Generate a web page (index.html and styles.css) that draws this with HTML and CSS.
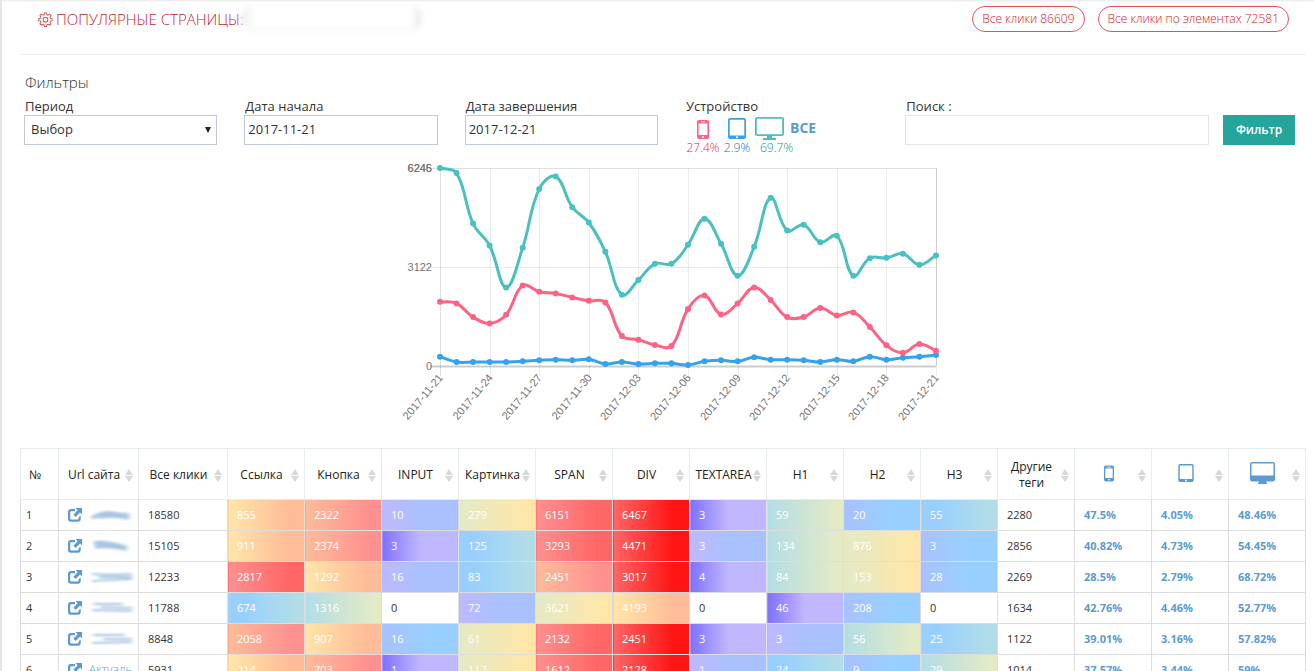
FILE: index.html
```html
<!DOCTYPE html>
<html lang="ru">
<head>
<meta charset="utf-8">
<title>Популярные страницы</title>
<link rel="stylesheet" href="styles.css">
</head>
<body>
<svg class="defs" aria-hidden="true">
  <defs>
    <filter id="soft" x="-20%" y="-60%" width="140%" height="220%"><feGaussianBlur stdDeviation="2 .8"/></filter>
    <symbol id="i-phone" viewBox="0 0 12 19"><path fill-rule="evenodd" d="M2 0h8a2 2 0 0 1 2 2v15a2 2 0 0 1-2 2H2a2 2 0 0 1-2-2V2a2 2 0 0 1 2-2zM1.600 3.500v11.500h8.800V3.500zM4 1.400v.9h4v-.9zM6 16a1 1 0 1 0 0 2 1 1 0 0 0 0-2z"/></symbol>
    <symbol id="i-tablet" viewBox="0 0 18 21"><path fill-rule="evenodd" d="M2 0h14a2 2 0 0 1 2 2v17a2 2 0 0 1-2 2H2a2 2 0 0 1-2-2V2a2 2 0 0 1 2-2zM1.700 1.800v15.700h14.600V1.800zM9 18.200a1.100 1.100 0 1 0 0 2.200 1.100 1.100 0 0 0 0-2.200z"/></symbol>
    <symbol id="i-screen" viewBox="0 0 29 23"><path fill-rule="evenodd" d="M2 0h25a2 2 0 0 1 2 2v15a2 2 0 0 1-2 2H2a2 2 0 0 1-2-2V2a2 2 0 0 1 2-2zM1.800 1.800v15.400h25.400V1.800z"/><path d="M12 19h5v2h4v2H8v-2h4z"/></symbol>
    <symbol id="i-desktop" viewBox="0 0 25 22"><path fill-rule="evenodd" d="M2 0h21a2 2 0 0 1 2 2v15.500a2 2 0 0 1-2 2h-7v1h1V22H8v-1.500h1v-1H2a2 2 0 0 1-2-2V2a2 2 0 0 1 2-2zM1.500 1.500v12h22v-12z"/></symbol>
    <symbol id="i-sort" viewBox="0 0 8 13"><path d="M4 0l4 6H0zM4 13l4-6H0z"/></symbol>
    <symbol id="i-open" viewBox="0 0 14 14"><path fill-rule="evenodd" d="M3 1h4v2.200H3.500q-1.300 0-1.300 1.300v5.800q0 1.300 1.300 1.300h5.800q1.300 0 1.300-1.300V9.200L12.700 7.500V11q0 2.800-2.800 2.800H3Q0 13.800 0 11V4Q0 1 3 1z"/><path d="M7.500 0H14v6.500L12 4.600 7.700 9 5.400 6.700 9.600 2.200z"/></symbol>
    <symbol id="i-gear" viewBox="0 0 16 16"><g fill="none" stroke="currentColor" stroke-width="1.100" stroke-linejoin="round"><path d="M6.900 1h2.200l.4 1.900 1.200.5 1.700-1.100 1.500 1.500-1.100 1.700.5 1.200 1.900.4v2.200l-1.900.4-.5 1.200 1.100 1.700-1.500 1.500-1.700-1.100-1.200.5-.4 1.900H6.900l-.4-1.900-1.200-.5-1.700 1.100-1.500-1.500 1.100-1.700-.5-1.200L.8 9.300V7.100l1.900-.4.5-1.200-1.100-1.700 1.500-1.500 1.700 1.100 1.200-.5z"/><circle cx="8" cy="8.200" r="2.500"/></g></symbol>
  </defs>
</svg>

<div class="page">
  <header class="head">
    <h1 class="head-title"><svg class="gear"><use href="#i-gear"/></svg>Популярные страницы:</h1>
    <span class="head-mask"></span>
    <div class="head-stats">
      <button class="pill" type="button">Все клики 86609</button>
      <button class="pill" type="button">Все клики по элементах 72581</button>
    </div>
  </header>

  <form class="filters" onsubmit="return false">
    <h2 class="filters-title">Фильтры</h2>
    <div class="filters-row">
      <div class="field">
        <label for="period">Период</label>
        <div class="select-box"><select id="period"><option>Выбор</option></select></div>
      </div>
      <div class="field">
        <label for="from">Дата начала</label>
        <input id="from" type="text" value="2017-11-21">
      </div>
      <div class="field">
        <label for="to">Дата завершения</label>
        <input id="to" type="text" value="2017-12-21">
      </div>
      <div class="field">
        <span class="field-name">Устройство</span>
        <div class="devices">
          <a class="device device-phone" href="#"><svg><use href="#i-phone"/></svg><span>27.4%</span></a>
          <a class="device device-tablet" href="#"><svg><use href="#i-tablet"/></svg><span>2.9%</span></a>
          <a class="device device-screen" href="#"><svg><use href="#i-screen"/></svg><span>69.7%</span></a>
          <a class="device-all" href="#">ВСЕ</a>
        </div>
      </div>
      <div class="search">
        <div class="field field-search">
          <label for="search">Поиск :</label>
          <input id="search" class="input-light" type="text">
        </div>
        <button class="submit" type="submit">Фильтр</button>
      </div>
    </div>
  </form>

  <svg class="chart" id="chart" viewBox="0 0 556 272" role="img" aria-label="Клики по дням"></svg>

  <table class="stats">
    <colgroup><col class="col-num"><col class="col-url"><col class="col-all"><col span="14"></colgroup>
    <thead><tr id="head"></tr></thead>
    <tbody id="rows"></tbody>
  </table>
</div>
<script src="app.js"></script>
</body>
</html>
```
FILE: styles.css
```css
* { box-sizing: border-box; }

html, body { height: 100%; }

body {
  margin: 0;
  overflow: hidden;
  background: #fff;
  color: #333;
  font: 13px/18px "Open Sans", "Noto Sans", sans-serif;
}

a { color: #5b9bd1; text-decoration: none; }
input, select, button { font: inherit; color: inherit; border-radius: 0; }
.defs { position: absolute; width: 0; height: 0; }

.page {
  min-height: 100%;
  padding: 0 8px 0 18px;
  border-left: 2px solid #e5e5e5;
  box-shadow: inset 0 3px 2px -2px #e8e8e8;
}

.head {
  display: flex;
  align-items: flex-start;
  height: 55px;
  padding: 6px 17px 0 18px;
  border-bottom: 1px solid #eee;
}
.head-title {
  display: flex;
  align-items: center;
  gap: 3px;
  margin: 0;
  color: #c0282e;
  font-size: 15px;
  font-weight: 300;
  line-height: 26px;
  text-transform: uppercase;
}
.gear { width: 15px; height: 15px; color: #cb5a5e; }
.head-mask {
  width: 182px;
  height: 22px;
  margin-left: -3px;
  border-radius: 10px;
  background: linear-gradient(90deg, #efefef, #fff 8%, #fff 93%, #ececec 98%, #fff);
  box-shadow: 0 2px 4px #f3f3f3;
  filter: blur(2px);
}
.head-stats { display: flex; gap: 13px; margin-left: auto; }
.pill {
  height: 26px;
  padding: 0 9px;
  border: 1px solid #e7505a;
  border-radius: 13px;
  background: #fff;
  color: #d81420;
  font-size: 12px;
  font-weight: 300;
}

.filters { padding: 17px 11px 0 4px; }
.filters-title { margin: 0 0 6px 1px; font-size: 15px; font-weight: 300; line-height: 20px; }
.filters-row {
  display: grid;
  grid-template-columns: repeat(4, minmax(0, 193fr)) minmax(0, 389fr);
  gap: 27px;
}
.field { display: flex; flex-direction: column; }
.field label, .field-name { padding-left: 1px; line-height: 17px; }
.field input, .field select {
  width: 100%;
  height: 30px;
  padding: 0 3px 2px;
  border: 1px solid #c2cad8;
  background: #fff;
}
.field .input-light { border-color: #e5e5e5; }
.select-box { position: relative; }
.select-box select { display: block; padding: 0 6px 2px; appearance: none; }
.select-box::after {
  content: "";
  position: absolute;
  top: 12px;
  right: 6px;
  border: 3px solid transparent;
  border-top: 6px solid #222;
  border-bottom: 0;
  pointer-events: none;
}
.search { display: flex; align-items: flex-end; gap: 14px; }
.field-search { flex: 1; }
.submit {
  width: 72px;
  height: 30px;
  padding: 0;
  border: 0;
  background: #26a69a;
  color: #fff;
  font-size: 12px;
  font-weight: 600;
}

.devices { display: flex; gap: 5px; height: 30px; padding: 2px 0 0 2px; }
.device { display: flex; flex-direction: column; align-items: center; font-size: 12px; font-weight: 300; line-height: 16px; }
.device svg { flex: none; }
.device-phone { width: 32px; color: #f01848; }
.device-phone svg { width: 12px; height: 19px; margin: 3px 0 1px; fill: #ff6384; }
.device-tablet { width: 26px; color: #0a72c8; }
.device-tablet svg { width: 18px; height: 21px; margin: 1px 0; fill: #36a2eb; }
.device-screen { width: 29px; align-items: flex-start; color: #0c9090; }
.device-screen svg { width: 29px; height: 23px; fill: #4bc0c0; }
.device-screen span { padding-left: 5px; }
.device-all { padding: 2px 0 0 1px; font-size: 14px; font-weight: 700; }

.chart { display: block; width: 556px; height: 272px; margin: 8px auto 23px; }
.chart text { fill: #747474; font: 11px "Liberation Sans", Arial, sans-serif; text-anchor: end; }
.grid, .grid-soft { fill: none; stroke: #000; stroke-opacity: .12; }
.grid-soft { stroke-opacity: .08; }
.axis { stroke: #000; stroke-opacity: .2; stroke-width: 2; }
.line { fill: none; stroke-width: 3; }

.stats { width: 100%; table-layout: fixed; border-collapse: collapse; }
.col-num { width: 38px; }
.col-url { width: 80px; }
.col-all { width: 89px; }
.stats th {
  position: relative;
  height: 51px;
  padding: 2px 13px 0 4px;
  border: 1px solid #e7ecf1;
  font-size: 12px;
  font-weight: 400;
  line-height: 16px;
  color: #222;
}
.stats th svg { fill: #5b9bd1; vertical-align: middle; }
.stats th > svg { margin-bottom: 4px; }
.sort {
  position: absolute;
  top: 20px;
  right: 5px;
  width: 8px;
  height: 13px;
  padding: 0;
  border: 0;
  background: none;
}
.stats th .sort svg { display: block; width: 8px; height: 13px; fill: #d8d8d8; }
.h-phone { width: 10px; height: 17px; }
.h-tablet { width: 16px; height: 18px; }
.h-desktop { width: 25px; height: 22px; }
.stats td {
  height: 31px;
  padding: 0 9px;
  border: 1px solid #ddd;
  font-size: 11px;
  line-height: 18px;
  white-space: nowrap;
  overflow: hidden;
}
.stats .num { padding: 0 5px; }
.stats .share { color: #5b9bd1; font-weight: 700; }
.site { display: flex; align-items: center; gap: 7px; font-size: 12px; font-weight: 300; }
.site svg { flex: none; }
.site-icon { width: 14px; height: 14px; fill: #5b9bd1; }
.smear { width: 50px; height: 18px; }

.stats .heat { color: #fff; }
.heat-0 { background: linear-gradient(90deg, #8070ff, #c0b8ff 50%); }
.heat-1 { background: linear-gradient(90deg, #c0b8ff, #a9c1ff 50%); }
.heat-2 { background: linear-gradient(90deg, #a9c1ff, #99cfff 60%); }
.heat-3 { background: linear-gradient(90deg, #99cfff 20%, #b2dde6 90%); }
.heat-4 { background: linear-gradient(90deg, #b2dde6, #e3eac6 90%); }
.heat-5 { background: linear-gradient(90deg, #e3eac6, #ffe6a8 90%); }
.heat-6 { background: linear-gradient(90deg, #ffe6a8, #ffbc98 80%); }
.heat-7 { background: linear-gradient(90deg, #ffbc98, #ff9090 85%); }
.heat-8 { background: linear-gradient(90deg, #ff9090, #ff6666 80%); }
.heat-9 { background: linear-gradient(90deg, #ff6666, #ff1414 78%); }
```
FILE: app.js
```js
const icon = (name, cls) => `<svg class="${cls}"><use href="#i-${name}"/></svg>`;

/* ---- chart ---- */
const plot = { left: 55, right: 551, top: 15, bottom: 213, max: 6245 };
const series = [
  { color: '#4bc0c0', data: [6245,6090,4494,3801,2478,3728,5586,5975,5009,4526,3602,2247,2709,3224,3224,3822,4641,3854,2846,3759,5303,4274,4452,3906,4106,2846,3402,3413,3539,3192,3486] },
  { color: '#ff6384', data: [2027,1974,1544,1344,1617,2541,2342,2289,2163,2058,2006,945,830,662,630,1796,2226,1628,1974,2478,2079,1544,1544,1827,1596,1691,1229,651,420,693,483] },
  { color: '#36a2eb', data: [294,126,126,126,126,147,179,200,179,210,63,126,63,84,84,32,147,179,147,273,200,200,179,126,200,147,294,200,263,294,347] }
];
const px = i => plot.left + (plot.right - plot.left) * i / 30;
const py = v => plot.bottom - (plot.bottom - plot.top) * v / plot.max;
const clamp = y => Math.min(plot.bottom, Math.max(plot.top, y));

function curve(points) {
  const controls = points.map((p, i) => {
    const a = points[i - 1] || p, b = points[i + 1] || p;
    const d1 = Math.hypot(p[0] - a[0], p[1] - a[1]), d2 = Math.hypot(b[0] - p[0], b[1] - p[1]);
    const k1 = 0.4 * d1 / (d1 + d2), k2 = 0.4 * d2 / (d1 + d2);
    return {
      before: [p[0] - k1 * (b[0] - a[0]), clamp(p[1] - k1 * (b[1] - a[1]))],
      after: [p[0] + k2 * (b[0] - a[0]), clamp(p[1] + k2 * (b[1] - a[1]))]
    };
  });
  return points.map((p, i) => i ? `C${controls[i - 1].after} ${controls[i].before} ${p}` : `M${p}`).join('');
}

let art = '';
for (let i = 0; i <= 30; i += 3) {
  const x = Math.round(px(i)) + 0.5;
  const day = new Date(Date.UTC(2017, 10, 21 + i)).toISOString().slice(0, 10);
  art += `<path class="${i ? 'grid-soft' : 'grid'}" d="M${x} 15V223"/>`;
  art += `<text transform="translate(${x + 3} 225) rotate(-50)">${day}</text>`;
}
art += '<path class="axis" d="M45 213.500H551"/><path class="grid" d="M45 15.500H551.500V213"/><path class="grid-soft" d="M45 114.500H551"/>';
art += '<text x="47" y="19">6246</text><text x="47" y="19">6245</text><text x="47" y="118">3122</text><text x="47" y="217">0</text>';
for (const s of [...series].reverse()) {
  const points = s.data.map((v, i) => [px(i), py(v)]);
  art += `<path class="line" stroke="${s.color}" d="${curve(points)}"/>`;
  art += points.map(p => `<circle cx="${p[0]}" cy="${p[1]}" r="3" fill="${s.color}"/>`).join('');
}
document.getElementById('chart').innerHTML = art;

/* ---- table ---- */
const titles = ['№', 'Url сайта', 'Все клики', 'Ссылка', 'Кнопка', 'INPUT', 'Картинка', 'SPAN', 'DIV', 'TEXTAREA', 'H1', 'H2', 'H3', 'Другие теги',
  icon('phone', 'h-phone'), icon('tablet', 'h-tablet'), icon('desktop', 'h-desktop')];
document.getElementById('head').innerHTML = titles.map((t, i) =>
  `<th scope="col">${t}${i ? `<button class="sort" type="button" aria-label="Сортировать">${icon('sort', '')}</button>` : ''}</th>`).join('');

const smears = [
  'M3 12Q12 7 20 7Q28 9 40 9M10 11Q26 8 40 12',
  'M5 6Q20 5 38 11M6 10Q22 8 38 12',
  'M3 6Q20 7 43 6M3 13Q20 12 43 11M10 9L43 9',
  'M4 5L34 5M3 11L43 12M12 8L43 9',
  'M4 5L36 5M3 13L43 12M14 9L43 9'
];
const rows = [
  { all: 18580, cells: [855,2322,10,279,6151,6467,3,59,20,55], heat: '6715890423', other: 2280, share: ['47.5%','4.05%','48.46%'] },
  { all: 15105, cells: [911,2374,3,125,3293,4471,3,134,876,3], heat: '6703891452', other: 2856, share: ['40.82%','4.73%','54.45%'] },
  { all: 12233, cells: [2817,1292,16,83,2451,3017,4,84,153,28], heat: '8613790452', other: 2269, share: ['28.5%','2.79%','68.72%'] },
  { all: 11788, cells: [674,1316,0,72,3621,4193,0,46,208,0], heat: '34-156-02-', other: 1634, share: ['42.76%','4.46%','52.77%'] },
  { all: 8848, cells: [2058,907,16,61,2132,2451,3,3,56,25], heat: '7625890143', other: 1122, share: ['39.01%','3.16%','57.82%'] },
  { all: 5931, cells: [214,703,1,117,1612,2128,1,24,9,29], heat: '6705891324', other: 1014, share: ['37.57%','3.44%','59%'] }
];
document.getElementById('rows').innerHTML = rows.map((r, n) => {
  const site = smears[n]
    ? `<svg class="smear" viewBox="0 0 50 18"><path d="${smears[n]}" fill="none" stroke="#8fb2d8" stroke-width="${n < 2 ? 4 : 2}" opacity=".75" filter="url(#soft)"/></svg>`
    : 'Актуаль';
  return `<tr><td class="num">${n + 1}</td><td><a class="site" href="#">${icon('open', 'site-icon')}${site}</a></td><td>${r.all}</td>` +
    r.cells.map((v, i) => `<td${r.heat[i] === '-' ? '' : ` class="heat heat-${r.heat[i]}"`}>${v}</td>`).join('') +
    `<td>${r.other}</td>` + r.share.map(v => `<td class="share">${v}</td>`).join('') + '</tr>';
}).join('');
```
